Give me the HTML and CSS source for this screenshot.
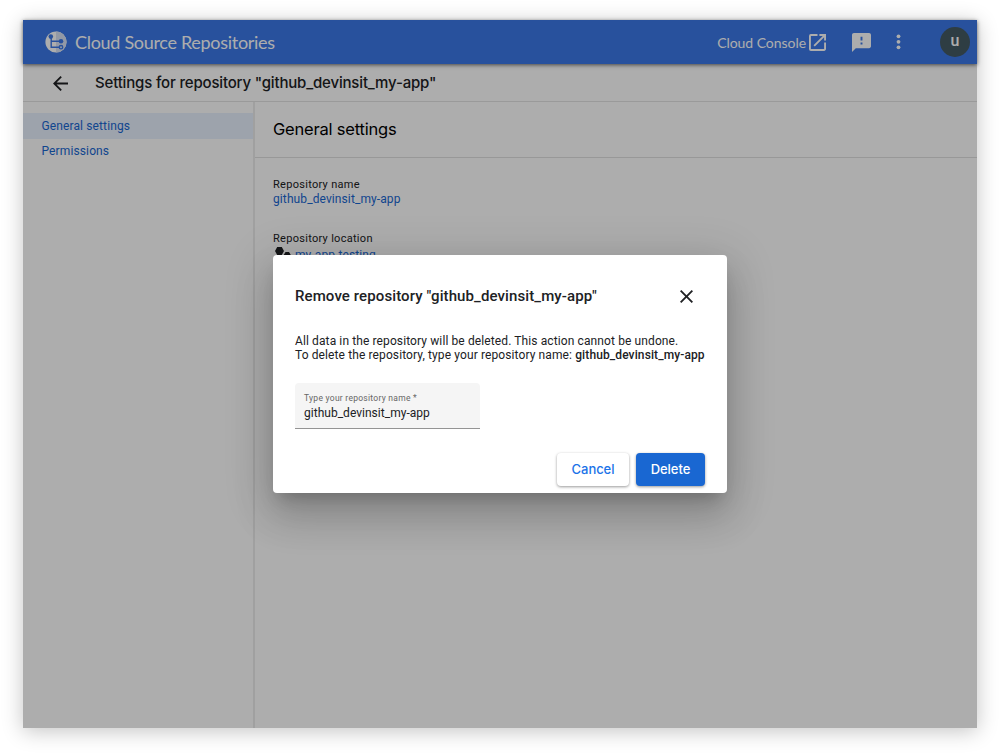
FILE: index.html
```html
<!DOCTYPE html>
<html lang="en">
<head>
<meta charset="utf-8">
<title>Cloud Source Repositories</title>
<link rel="stylesheet" href="styles.css">
</head>
<body>
<div class="window">
  <header class="topbar">
    <svg class="logo" viewBox="0 0 22 22" width="22" height="22">
      <circle cx="11" cy="11" r="10.6" fill="#fff"/>
      <path d="M11 .4a10.600 10.600 0 0 1 0 21.200z" fill="#d8e2f5"/>
      <g fill="none" stroke="#3b78e7" stroke-width="1.4">
        <path d="M6.200 6v10.200H14M6.200 10.200H15"/>
        <circle cx="16" cy="16.200" r="1.700"/>
      </g>
      <circle cx="5.800" cy="5.600" r="2.300" fill="#3b78e7"/>
      <circle cx="16" cy="10.200" r="2.300" fill="#3b78e7"/>
    </svg>
    <span class="product">Cloud Source Repositories</span>
    <a class="console"><span class="console-text">Cloud Console</span>
      <svg viewBox="3 3 18 18" width="17" height="17"><path fill="#fff" d="M19 19H5V5h7V3H5a2 2 0 0 0-2 2v14a2 2 0 0 0 2 2h14c1.100 0 2-.9 2-2v-7h-2v7zM14 3v2h3.590l-9.830 9.830 1.410 1.410L19 6.410V10h2V3h-7z"/></svg>
    </a>
    <svg class="feedback" viewBox="2 2 20 20" width="19" height="19"><path fill="#fff" d="M20 2H4c-1.100 0-2 .9-2 2v18l4-4h14c1.100 0 2-.9 2-2V4c0-1.100-.9-2-2-2zm-7 12h-2v-2h2v2zm0-4h-2V6h2v4z"/></svg>
    <svg class="more" viewBox="0 0 5 16" width="5" height="16" fill="#fff"><circle cx="2.500" cy="2.300" r="1.900"/><circle cx="2.500" cy="7.800" r="1.900"/><circle cx="2.500" cy="13.300" r="1.900"/></svg>
    <span class="avatar">u</span>
  </header>
  <div class="titlebar">
    <svg viewBox="4 4 16 16" width="15" height="15"><path fill="#202124" d="M20 11H7.830l5.590-5.590L12 4l-8 8 8 8 1.410-1.410L7.830 13H20v-2z"/></svg>
    <h1 class="page-title">Settings for repository "github_devinsit_my-app"</h1>
  </div>
  <div class="body">
    <nav class="sidebar">
      <a class="nav-item selected">General settings</a>
      <a class="nav-item">Permissions</a>
    </nav>
    <main class="content">
      <h2 class="section-title">General settings</h2>
      <div class="fields">
        <div class="label">Repository name</div>
        <a class="value">github_devinsit_my-app</a>
        <div class="label second">Repository location</div>
        <a class="value location">
          <svg viewBox="0 0 18 16" width="18" height="16" fill="#202124"><path d="M4.200 0h4.600L11 4 8.800 8H4.200L2 4zM12.500 5h3.500l1.800 3-1.800 3h-3.500l-1.800-3zM5 10h4l2 3-2 3H5l-2-3z"/></svg>
          <span>my-app-testing</span>
        </a>
      </div>
    </main>
  </div>
  <div class="scrim"></div>
  <section class="dialog" role="dialog">
    <div class="dialog-head">
      <h3 class="dialog-title">Remove repository "github_devinsit_my-app"</h3>
      <svg class="close" viewBox="5 5 14 14" width="13" height="13"><path fill="#202124" d="M19 6.410 17.590 5 12 10.590 6.410 5 5 6.410 10.590 12 5 17.590 6.410 19 12 13.410 17.590 19 19 17.590 13.410 12z"/></svg>
    </div>
    <p class="message"><span>All data in the repository will be deleted. This action cannot be undone.</span><br><span>To delete the repository, type your repository name: <b>github_devinsit_my-app</b></span></p>
    <div class="input">
      <div class="input-label">Type your repository name *</div>
      <div class="input-value">github_devinsit_my-app</div>
    </div>
    <div class="actions">
      <button class="btn cancel">Cancel</button>
      <button class="btn delete">Delete</button>
    </div>
  </section>
</div>
</body>
</html>
```
FILE: styles.css
```css
* { box-sizing: border-box; }
body {
  margin: 0;
  padding: 20px 23px;
  height: 754px;
  overflow: hidden;
  background: #fff;
  font-family: Roboto, sans-serif;
  color: #202124;
}
h1, h2, h3, p { margin: 0; font-weight: 400; }
svg { display: block; flex: none; }
span, h1, h3, .label, .value, .input-label { white-space: nowrap; }
.window {
  position: relative;
  display: flex;
  flex-direction: column;
  width: 954px;
  height: 708px;
  background: #fff;
  box-shadow: 0 3px 20px rgba(0, 0, 0, .24);
}
.topbar {
  display: flex;
  align-items: center;
  height: 44px;
  flex: none;
  padding: 0 7px 0 22px;
  background: #3b78e7;
  color: #fff;
  box-shadow: 0 1px 4px rgba(0, 0, 0, .6);
  font-family: Lato, sans-serif;
  z-index: 1;
}
.product { margin-left: 8px; font-size: 18px; line-height: 24px; letter-spacing: -.3px; }
.console { display: flex; align-items: center; gap: 3px; margin-left: auto; }
.console-text { font-size: 14px; letter-spacing: -.05px; }
.feedback { margin-left: 26px; }
.more { margin-left: 25px; }
.avatar {
  width: 30px;
  height: 30px;
  margin-left: 39px;
  border-radius: 50%;
  background: #455a64;
  font: 500 16px/28px Roboto, sans-serif;
  text-align: center;
}
.titlebar {
  display: flex;
  align-items: center;
  height: 38px;
  flex: none;
  padding: 1px 0 0 29.500px;
  border-bottom: 1px solid #e4e4e4;
}
.page-title { margin-left: 27.500px; font: 500 15px/20px Inter, sans-serif; letter-spacing: -.17px; }
.body { display: flex; flex: 1; }
.sidebar { width: 232px; padding-top: 11px; border-right: 2px solid #ececec; }
.nav-item {
  display: flex;
  align-items: center;
  height: 25.500px;
  padding-left: 18.500px;
  color: #1967d2;
  font-size: 12px;
  letter-spacing: .12px;
}
.selected { background: #e8f0fe; }
.content { flex: 1; }
.section-title {
  height: 56px;
  padding: 16px 0 0 18px;
  border-bottom: 1px solid #e0e0e0;
  font: 400 16.500px/22px Inter, sans-serif;
  letter-spacing: -.2px;
  color: #000;
}
.fields { padding: 20px 0 0 18px; }
.label { font-size: 11px; line-height: 14px; letter-spacing: .29px; }
.second { margin-top: 25px; }
.value { display: block; font-size: 12px; line-height: 15px; letter-spacing: .1px; color: #1967d2; }
.location { display: flex; gap: 4px; padding-top: 1px; }
.location span { padding-top: 1px; }
.scrim { position: absolute; inset: 0; z-index: 2; background: rgba(0, 0, 0, .32); }
.dialog {
  position: absolute;
  z-index: 3;
  left: 250px;
  top: 235px;
  width: 454px;
  height: 238px;
  padding: 30px 22px 0;
  border-radius: 4px;
  background: #fff;
  box-shadow: 0 11px 15px -7px rgba(0, 0, 0, .2), 0 24px 38px 3px rgba(0, 0, 0, .14), 0 9px 46px 8px rgba(0, 0, 0, .12);
}
.dialog-head { display: flex; align-items: center; justify-content: space-between; padding-right: 12px; }
.dialog-title { font-size: 15px; line-height: 22px; font-weight: 500; letter-spacing: .11px; }
.message { margin-top: 27px; font-size: 12px; line-height: 14px; letter-spacing: .11px; }
.message b { font-weight: 500; }
.input {
  width: 185px;
  height: 46px;
  margin-top: 21px;
  padding: 9px 9px 0;
  border-bottom: 1px solid #949494;
  border-radius: 4px 4px 0 0;
  background: #f5f5f5;
}
.input-label { padding-top: 1px; font-size: 8.500px; line-height: 11px; letter-spacing: .27px; color: #666; }
.input-value { margin-top: 2px; font-size: 12px; line-height: 14px; letter-spacing: .02px; }
.actions { display: flex; justify-content: flex-end; gap: 7px; margin-top: 24px; }
.btn {
  height: 33px;
  padding: 0;
  border: 0;
  border-radius: 4px;
  background: #fff;
  box-shadow: 0 1px 3px rgba(0, 0, 0, .4);
  font: 500 13px/33px Inter, sans-serif;
  letter-spacing: -.05px;
  color: #1a73e8;
}
.cancel { width: 72px; }
.delete { width: 69px; background: #1967d2; color: #fff; }
```
